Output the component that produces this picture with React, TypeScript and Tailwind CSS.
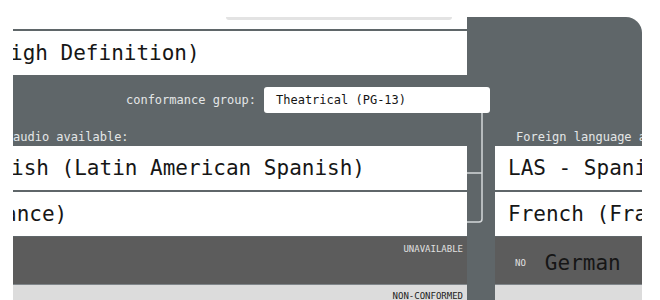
const mono = "font-['DejaVu_Sans_Mono','Liberation_Mono',monospace]";

function BigRow({ left, right, leftShift = 0 }: { left: string; right: string; leftShift?: number }) {
  return (
    <div className="flex h-[44px] shrink-0">
      <div className="flex w-[454px] items-center overflow-hidden bg-white">
        <span
          className={`${mono} whitespace-nowrap text-[21px] leading-none text-[#161616]`}
          style={{ marginLeft: leftShift }}
        >
          {left}
        </span>
      </div>
      <div className="w-[28px]" />
      <div className="flex w-[147px] items-center overflow-hidden bg-white pl-[13px]">
        <span className={`${mono} whitespace-nowrap text-[21px] leading-none text-[#161616]`}>{right}</span>
      </div>
    </div>
  );
}

export default function App() {
  return (
    <div className="h-[300px] w-[660px] overflow-hidden bg-white">
      <div className="relative ml-[13px] mt-[17px] flex w-[629px] flex-col rounded-tr-[16px] bg-[#5f6669]">
        {/* top card */}
        <div className="flex w-[454px] shrink-0 flex-col gap-[2px]">
          <div className="h-[12px] bg-white">
            <div className="ml-[213px] h-[3px] w-[226px] rounded-b-sm bg-[#e3e3e3]" />
          </div>
          <div className="flex h-[44px] items-center overflow-hidden bg-white">
            <span className={`${mono} ml-[-3px] whitespace-nowrap text-[21px] leading-none text-[#161616]`}>
              igh Definition)
            </span>
          </div>
        </div>

        {/* conformance */}
        <div className="flex h-[71px] shrink-0 flex-col pt-[12px]">
          <div className="flex h-[26px] w-[477px] items-center justify-end gap-[8px]">
            <span className={`${mono} text-[12px] text-[#e4e6e7]`}>conformance group:</span>
            <div className="flex h-[26px] w-[226px] items-center rounded-[3px] bg-white pl-[12px]">
              <span className={`${mono} text-[12px] text-[#141414]`}>Theatrical (PG-13)</span>
            </div>
          </div>
          <div className="mt-[15px] flex h-[14px] items-center">
            <div className="w-[454px] overflow-hidden">
              <span className={`${mono} whitespace-nowrap text-[12px] text-[#e4e6e7]`}>audio available:</span>
            </div>
            <div className="w-[28px]" />
            <div className="w-[147px] overflow-hidden pl-[21px]">
              <span className={`${mono} whitespace-nowrap text-[12px] text-[#e4e6e7]`}>Foreign language audio</span>
            </div>
          </div>
        </div>

        {/* rows */}
        <div className="flex shrink-0 flex-col gap-[2px]">
          <BigRow left="ish (Latin American Spanish)" right="LAS - Spanish" leftShift={-2} />
          <BigRow left="ance)" right="French (France)" leftShift={-9} />
        </div>
        <div className="mt-[1px] flex h-[48px] shrink-0">
          <div className="flex w-[454px] justify-end border-b border-[#80868a] bg-[#5c5c5c] pr-[4px] pt-[7px]">
            <span className={`${mono} text-[9px] leading-[10px] text-[#e0e0e0]`}>UNAVAILABLE</span>
          </div>
          <div className="w-[28px]" />
          <div className="flex w-[147px] items-center gap-[19px] border-b border-[#80868a] bg-[#5c5c5c] pl-[20px] pt-[6px]">
            <span className={`${mono} text-[9px] text-[#e0e0e0]`}>NO</span>
            <span className={`${mono} whitespace-nowrap text-[21px] leading-none text-[#161616]`}>German</span>
          </div>
        </div>
        <div className="flex h-[20px] shrink-0">
          <div className="flex w-[454px] justify-end bg-[#dcdcdc] pr-[4px] pt-[6px]">
            <span className={`${mono} text-[9px] leading-[10px] text-[#222222]`}>NON-CONFORMED</span>
          </div>
          <div className="w-[28px]" />
          <div className="w-[147px] bg-[#dcdcdc]" />
        </div>

        {/* bracket connector */}
        <svg className="absolute left-[452px] top-[96px]" width="20" height="112" viewBox="0 0 20 112">
          <path
            d="M17 0 V106 Q17 109 14 109 H2 M17 60 H2"
            fill="none"
            stroke="#d4d7d9"
            strokeWidth="1.5"
          />
        </svg>
      </div>
    </div>
  );
}
